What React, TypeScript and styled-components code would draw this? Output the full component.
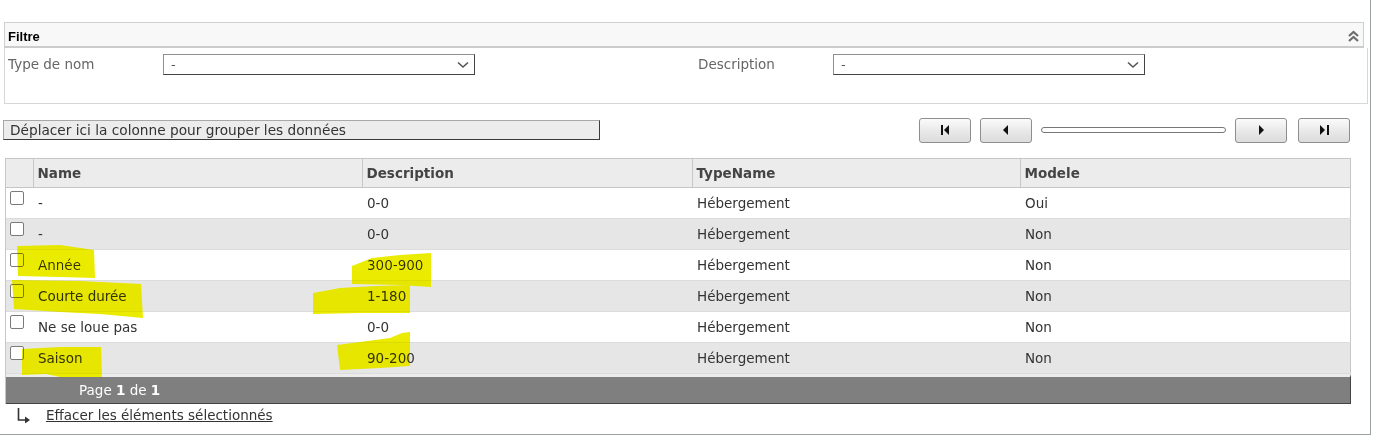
import styled, { createGlobalStyle } from 'styled-components';

const GlobalStyle = createGlobalStyle`
  html, body {
    margin: 0;
    padding: 0;
    background: #ffffff;
  }
  body {
    font-family: 'DejaVu Sans', Verdana, sans-serif;
    font-size: 13.5px;
    color: #333333;
  }
`;

type Row = {
  name: string;
  description: string;
  typeName: string;
  modele: string;
};

const rows: Row[] = [
  { name: '-', description: '0-0', typeName: 'Hébergement', modele: 'Oui' },
  { name: '-', description: '0-0', typeName: 'Hébergement', modele: 'Non' },
  { name: 'Année', description: '300-900', typeName: 'Hébergement', modele: 'Non' },
  { name: 'Courte durée', description: '1-180', typeName: 'Hébergement', modele: 'Non' },
  { name: 'Ne se loue pas', description: '0-0', typeName: 'Hébergement', modele: 'Non' },
  { name: 'Saison', description: '90-200', typeName: 'Hébergement', modele: 'Non' },
];

// marker strokes drawn over the screenshot
const highlights = [
  'M17 246 L60 245 L94 250 L95 278 L60 277 L18 276 Z',
  'M352 266 L372 258 L400 255 L431 253 L431 287 L400 285 L352 284 Z',
  'M12 280 L80 281 L141 284 L143 318 L100 314 L60 312 L14 309 Z',
  'M313 293 L340 288 L375 286 L410 285 L410 313 L360 313 L313 314 Z',
  'M22 349 L60 347 L101 347 L102 377 L60 377 L46 374 L22 375 Z',
  'M337 345 L360 342 L390 338 L402 333 L410 332 L410 366 L380 368 L340 370 Z',
];

function ChevronDown() {
  return (
    <svg width="12" height="8" viewBox="0 0 12 8">
      <path d="M1 1.5 L6 6 L11 1.5" fill="none" stroke="#555" strokeWidth="1.6" />
    </svg>
  );
}

function App() {
  return (
    <>
      <GlobalStyle />
      <Page>
        <FilterPanel>
          <FilterHeader>
            <FilterTitle>Filtre</FilterTitle>
            <svg width="13" height="12" viewBox="0 0 13 12">
              <path d="M2 6 L6.5 2 L11 6" fill="none" stroke="#6d6d6d" strokeWidth="2.2" />
              <path d="M2 11 L6.5 7 L11 11" fill="none" stroke="#6d6d6d" strokeWidth="2.2" />
            </svg>
          </FilterHeader>
          <FilterBody>
            <FilterLabel>Type de nom</FilterLabel>
            <Select>
              <span>-</span>
              <ChevronDown />
            </Select>
            <span />
            <FilterLabel>Description</FilterLabel>
            <Select>
              <span>-</span>
              <ChevronDown />
            </Select>
          </FilterBody>
        </FilterPanel>

        <Toolbar>
          <GroupPanel>Déplacer ici la colonne pour grouper les données</GroupPanel>
          <Pager>
            <PagerButton>
              <svg width="9" height="10" viewBox="0 0 9 10">
                <rect x="0" y="0" width="2" height="10" fill="#111" />
                <path d="M8 0 L3 5 L8 10 Z" fill="#111" />
              </svg>
            </PagerButton>
            <PagerButton>
              <svg width="6" height="10" viewBox="0 0 6 10">
                <path d="M5 0 L0 5 L5 10 Z" fill="#111" />
              </svg>
            </PagerButton>
            <Track />
            <PagerButton>
              <svg width="6" height="10" viewBox="0 0 6 10">
                <path d="M1 0 L6 5 L1 10 Z" fill="#111" />
              </svg>
            </PagerButton>
            <PagerButton $wide>
              <svg width="9" height="10" viewBox="0 0 9 10">
                <path d="M0 0 L5 5 L0 10 Z" fill="#111" />
                <rect x="7" y="0" width="2" height="10" fill="#111" />
              </svg>
            </PagerButton>
          </Pager>
        </Toolbar>

        <GridBox>
          <Table>
            <colgroup>
              <col style={{ width: 27 }} />
              <col style={{ width: 329 }} />
              <col style={{ width: 330 }} />
              <col style={{ width: 328 }} />
              <col style={{ width: 330 }} />
            </colgroup>
            <thead>
              <tr>
                <HeadCell $first />
                <HeadCell>Name</HeadCell>
                <HeadCell>Description</HeadCell>
                <HeadCell>TypeName</HeadCell>
                <HeadCell>Modele</HeadCell>
              </tr>
            </thead>
            <tbody>
              {rows.map((row, index) => (
                <BodyRow key={index} $alt={index % 2 === 1}>
                  <CheckCell>
                    <CheckBox />
                  </CheckCell>
                  <Cell>{row.name}</Cell>
                  <Cell>{row.description}</Cell>
                  <Cell>{row.typeName}</Cell>
                  <Cell>{row.modele}</Cell>
                </BodyRow>
              ))}
            </tbody>
          </Table>
          <GridFooter>
            Page <b>1</b> de <b>1</b>
          </GridFooter>
        </GridBox>

        <ClearRow>
          <svg width="14" height="15" viewBox="0 0 14 15">
            <path d="M1.5 0 L1.5 12 L9 12" fill="none" stroke="#333" strokeWidth="1.6" />
            <path d="M8 8.5 L13 12 L8 15.5 Z" fill="#333" />
          </svg>
          <ClearLink>Effacer les éléments sélectionnés</ClearLink>
        </ClearRow>

        <Highlights width="1373" height="435" viewBox="0 0 1373 435">
          {highlights.map((d, i) => (
            <path key={i} d={d} fill="#ebeb00" />
          ))}
        </Highlights>
      </Page>
    </>
  );
}

const Page = styled.div`
  position: relative;
  box-sizing: border-box;
  width: 1371px;
  height: 435px;
  padding-top: 22px;
  border-right: 1px solid #9aa19f;
  border-bottom: 1px solid #9aa19f;
`;

const FilterPanel = styled.div`
  margin-left: 4px;
  width: 1364px;
`;

const FilterHeader = styled.div`
  box-sizing: border-box;
  width: 1360px;
  height: 26px;
  display: flex;
  align-items: center;
  justify-content: space-between;
  padding: 3px 3px 0 3px;
  background: #f8f8f8;
  border: 1px solid #d0d0d0;
  border-bottom: 2px solid #cccccc;
`;

const FilterTitle = styled.span`
  font-family: 'Liberation Sans', Arial, sans-serif;
  font-weight: bold;
  font-size: 13px;
  color: #000;
`;

const FilterBody = styled.div`
  box-sizing: border-box;
  height: 56px;
  display: grid;
  grid-template-columns: 155px 312px 223px 135px 312px;
  align-items: start;
  padding: 6px 0 0 3px;
  border: 1px solid #d6d6d6;
  border-top: none;
`;

const FilterLabel = styled.span`
  line-height: 21px;
  color: #666;
`;

const Select = styled.div`
  box-sizing: border-box;
  height: 21px;
  display: flex;
  align-items: center;
  justify-content: space-between;
  padding: 0 5px 0 7px;
  border: 1px solid;
  border-color: #8f8f8f #444 #444 #8f8f8f;
  background: #fff;
  color: #555;
  font-size: 13px;
`;

const Toolbar = styled.div`
  display: flex;
  align-items: center;
  width: 1347px;
  height: 26px;
  margin: 13px 0 0 3px;
`;

const GroupPanel = styled.div`
  box-sizing: border-box;
  width: 597px;
  height: 20px;
  padding-left: 6px;
  line-height: 18px;
  font-size: 13.7px;
  color: #333;
  background: #ececec;
  border: 1px solid;
  border-color: #a8a8a8 #3a3a3a #3a3a3a #a8a8a8;
`;

const Pager = styled.div`
  margin-left: auto;
  display: flex;
  align-items: center;
  gap: 9px;
`;

const PagerButton = styled.div<{ $wide?: boolean }>`
  box-sizing: border-box;
  width: 52px;
  height: 25px;
  margin-left: ${({ $wide }) => ($wide ? '2px' : '0')};
  display: flex;
  align-items: center;
  justify-content: center;
  border: 1px solid #8e8e8e;
  border-radius: 3px;
  background: linear-gradient(#fbfbfb, #e8e8e8 55%, #dcdcdc);
`;

const Track = styled.div`
  box-sizing: border-box;
  width: 185px;
  height: 6px;
  border: 1px solid #777;
  border-radius: 3px;
  background: #fff;
`;

const GridBox = styled.div`
  box-sizing: border-box;
  width: 1346px;
  margin: 15px 0 0 5px;
  border-left: 1px solid #c6c6c6;
`;

const Table = styled.table`
  width: 1344px;
  table-layout: fixed;
  border-collapse: collapse;
  border-top: 1px solid #c6c6c6;
  border-right: 1px solid #c6c6c6;
`;

const HeadCell = styled.th<{ $first?: boolean }>`
  height: 28px;
  padding: 0 4px;
  text-align: left;
  font-weight: bold;
  font-size: 13.5px;
  color: #444;
  background: #ececec;
  border-bottom: 1px solid #c6c6c6;
  border-left: ${({ $first }) => ($first ? 'none' : '1px solid #c6c6c6')};
`;

const BodyRow = styled.tr<{ $alt: boolean }>`
  height: 31px;
  background: ${({ $alt }) => ($alt ? '#e6e6e6' : '#ffffff')};
  border-bottom: 1px solid #dcdcdc;
`;

const Cell = styled.td`
  padding: 0 4px 0 5px;
  color: #333;
  white-space: nowrap;
`;

const CheckCell = styled.td`
  vertical-align: top;
  padding: 3px 0 0 4px;
`;

const CheckBox = styled.span`
  display: block;
  box-sizing: border-box;
  width: 14px;
  height: 14px;
  border: 1px solid #7a7a7a;
  border-radius: 2px;
  background: #fff;
`;

const GridFooter = styled.div`
  box-sizing: border-box;
  height: 30px;
  padding-left: 73px;
  line-height: 26px;
  color: #fff;
  background: #7f7f7f;
  border-top: 3px solid #ececec;
  border-right: 1px solid #444;
  border-bottom: 1px solid #444;
`;

const ClearRow = styled.div`
  display: flex;
  align-items: center;
  gap: 15px;
  height: 22px;
  padding-left: 17px;
`;

const ClearLink = styled.a`
  color: #333;
  text-decoration: underline;
  cursor: pointer;
`;

const Highlights = styled.svg`
  position: absolute;
  top: 0;
  left: 0;
  pointer-events: none;
  mix-blend-mode: darken;
`;

export default App;
